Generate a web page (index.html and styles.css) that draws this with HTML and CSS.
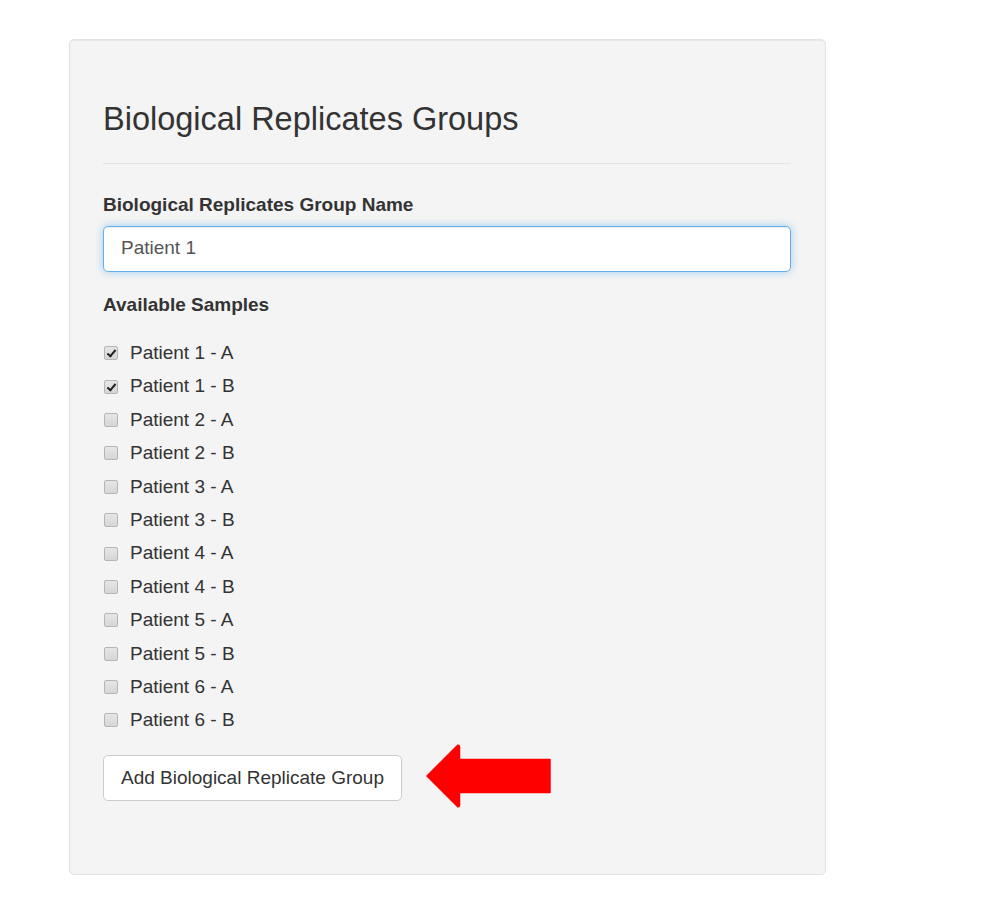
FILE: index.html
```html
<!DOCTYPE html>
<html lang="en">
<head>
<meta charset="utf-8">
<title>Biological Replicates Groups</title>
<link rel="stylesheet" href="styles.css">
</head>
<body>
<div class="page">
  <div class="well">
    <h3 class="page-header">Biological Replicates Groups</h3>
    <form class="group-form">
      <label class="field-label" for="groupName">Biological Replicates Group Name</label>
      <input id="groupName" class="text-input" type="text" value="Patient 1">
      <div class="field-label samples-label">Available Samples</div>
      <div class="sample-list">
        <label class="sample"><input type="checkbox" class="cb" checked><span>Patient 1 - A</span></label>
        <label class="sample"><input type="checkbox" class="cb" checked><span>Patient 1 - B</span></label>
        <label class="sample"><input type="checkbox" class="cb"><span>Patient 2 - A</span></label>
        <label class="sample"><input type="checkbox" class="cb"><span>Patient 2 - B</span></label>
        <label class="sample"><input type="checkbox" class="cb"><span>Patient 3 - A</span></label>
        <label class="sample"><input type="checkbox" class="cb"><span>Patient 3 - B</span></label>
        <label class="sample"><input type="checkbox" class="cb"><span>Patient 4 - A</span></label>
        <label class="sample"><input type="checkbox" class="cb"><span>Patient 4 - B</span></label>
        <label class="sample"><input type="checkbox" class="cb"><span>Patient 5 - A</span></label>
        <label class="sample"><input type="checkbox" class="cb"><span>Patient 5 - B</span></label>
        <label class="sample"><input type="checkbox" class="cb"><span>Patient 6 - A</span></label>
        <label class="sample"><input type="checkbox" class="cb"><span>Patient 6 - B</span></label>
      </div>
      <div class="action-row">
        <button type="button" class="btn">Add Biological Replicate Group</button>
        <svg class="arrow" width="126" height="64" viewBox="0 0 126 64" aria-hidden="true">
          <path d="M1 32 L32 1 L33.5 2 V15.5 H124 V48.5 H33.5 V62 L32 63 Z" fill="#ff0000" stroke="#ff0000" stroke-width="1.5" stroke-linejoin="round"/>
        </svg>
      </div>
    </form>
  </div>
</div>
</body>
</html>
```

FILE: styles.css
```css
html, body {
  margin: 0;
  padding: 0;
  background: #ffffff;
}

body {
  font-family: "Liberation Sans", Arial, sans-serif;
  font-size: 19px;
  color: #333333;
}

.page {
  padding: 39px 0 0 69px;
}

.well {
  width: 757px;
  box-sizing: border-box;
  background: #f4f4f4;
  border: 1px solid #e3e3e3;
  border-radius: 5px;
  box-shadow: inset 0 1px 1px rgba(0, 0, 0, 0.05);
  padding: 26px 34px 26px 33px;
}

.page-header {
  margin: 35px 0 0 0;
  padding: 0 0 26px 0;
  font-size: 32.5px;
  font-weight: normal;
  line-height: 36px;
  color: #333333;
  border-bottom: 1px solid #e4e4e4;
}

.group-form {
  display: flex;
  flex-direction: column;
  margin: 0 0 47px 0;
}

.field-label {
  display: block;
  margin-top: 27px;
  font-weight: bold;
  line-height: 27px;
  color: #333333;
}

.samples-label {
  margin-top: 19px;
}

.text-input {
  margin-top: 8px;
  height: 46px;
  box-sizing: border-box;
  width: 100%;
  padding: 0 17px 3px 17px;
  font-family: inherit;
  font-size: 19px;
  color: #555555;
  background: #ffffff;
  border: 1px solid #66afe9;
  border-radius: 5px;
  outline: none;
  box-shadow: inset 0 1px 1px rgba(0, 0, 0, 0.075), 0 0 8px rgba(102, 175, 233, 0.6);
}

.sample-list {
  display: flex;
  flex-direction: column;
  margin-top: 18px;
}

.sample {
  display: flex;
  align-items: center;
  height: 33.4px;
  line-height: 33.4px;
  color: #333333;
}

.cb {
  appearance: none;
  -webkit-appearance: none;
  width: 14px;
  height: 14px;
  margin: 1px 12px 0 1px;
  box-sizing: border-box;
  border: 1px solid #b5b5b5;
  border-radius: 2px;
  background: linear-gradient(#e6e6e6, #d6d6d6);
  position: relative;
}

.cb:checked::after {
  content: "";
  position: absolute;
  left: 4px;
  top: 1px;
  width: 3px;
  height: 7px;
  border: solid #222222;
  border-width: 0 2px 2px 0;
  transform: rotate(40deg);
}

.action-row {
  display: flex;
  align-items: flex-start;
  margin-top: 18px;
}

.btn {
  height: 46px;
  box-sizing: border-box;
  padding: 0 17px;
  font-family: inherit;
  font-size: 19px;
  color: #333333;
  background: #ffffff;
  border: 1px solid #cccccc;
  border-radius: 5px;
  line-height: 27px;
}

.arrow {
  display: block;
  margin: -11px 0 -7px 24px;
}
```
